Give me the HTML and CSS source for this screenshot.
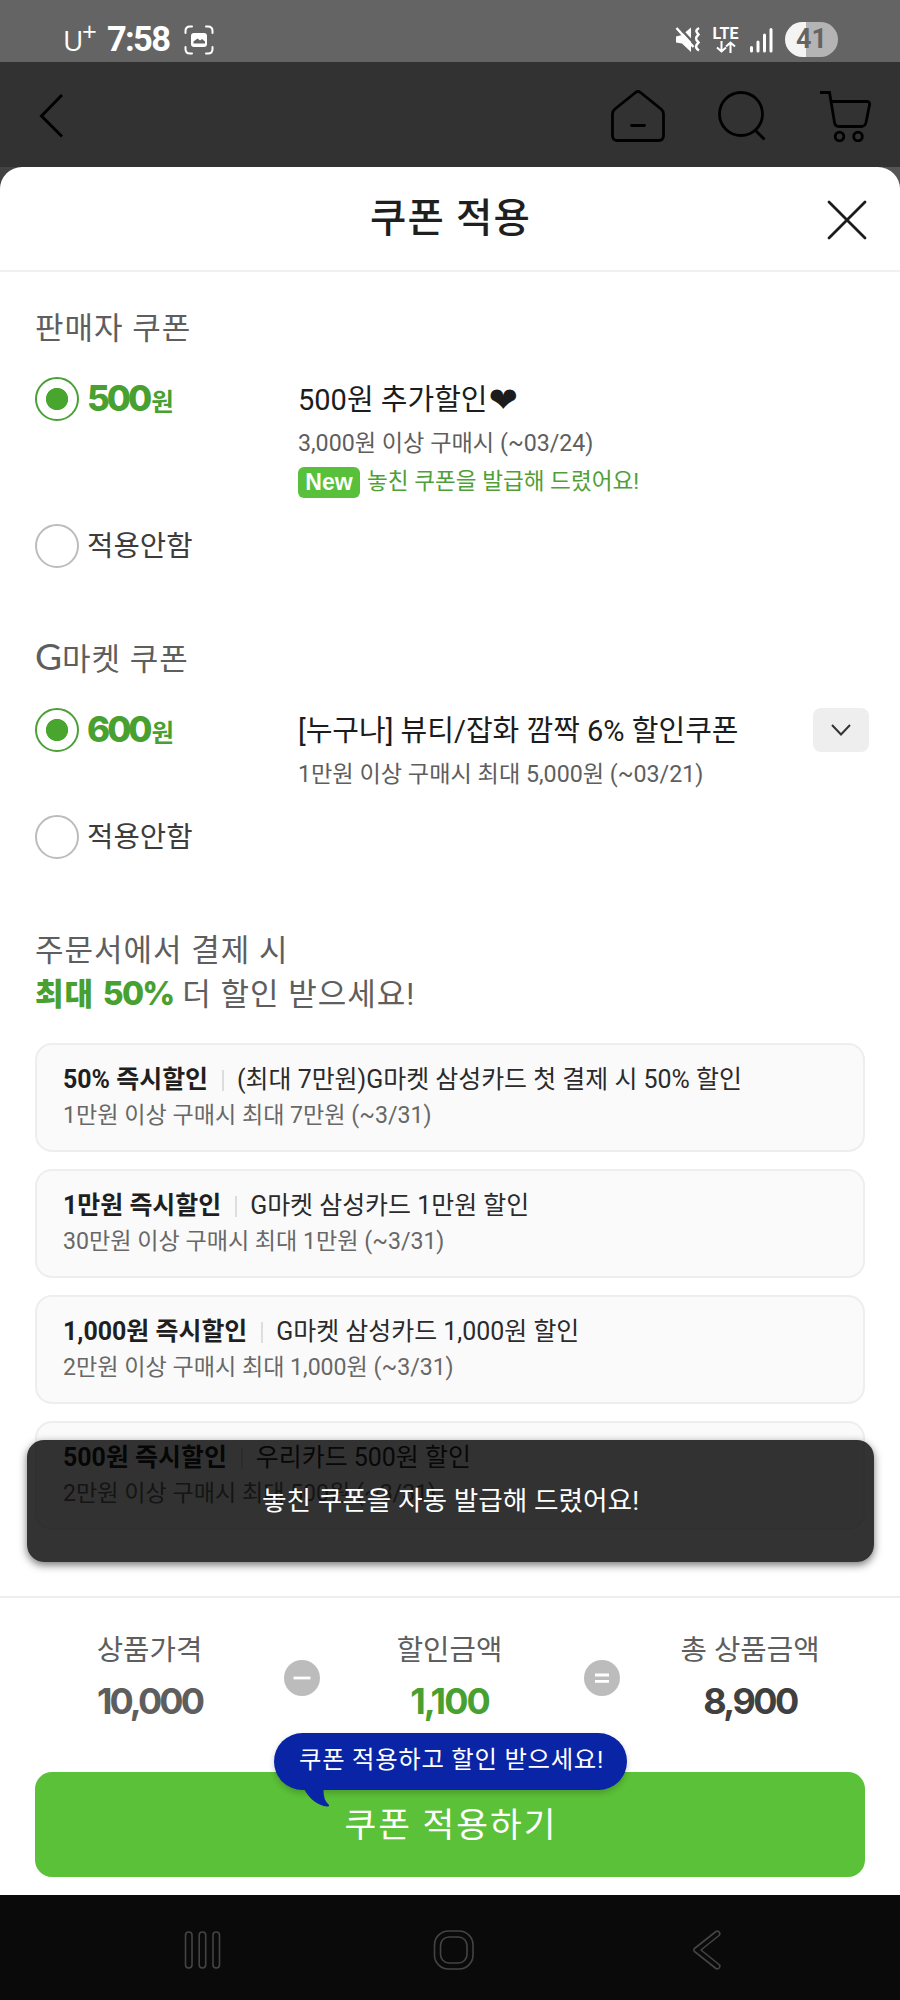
FILE: index.html
```html
<!DOCTYPE html>
<html lang="ko">
<head>
<meta charset="utf-8">
<title>쿠폰 적용</title>
<link rel="stylesheet" href="styles.css">
</head>
<body>
<div class="screen">
  <div class="statusbar">
    <div class="status-left">
      <span class="carrier">U<span class="plus">+</span></span>
      <span class="clock">7:58</span>
      <svg class="shot" width="30" height="30" viewBox="0 0 30 30" fill="none" stroke="#fff" stroke-width="2" stroke-linecap="round">
        <path d="M1.5 8V6q0-4.500 4.500-4.500H8M22 1.500h2q4.500 0 4.500 4.500v2M28.500 22v2q0 4.500-4.500 4.500h-2M8 28.500H6Q1.500 28.500 1.500 24v-2"/>
        <rect x="7" y="8" width="16" height="14" rx="3" fill="#fff" stroke="none"/>
        <path d="M9.500 18.500v-2l4-3 2.500 2 2-1.500 3 2.500v2z" fill="#646464" stroke="none"/>
      </svg>
    </div>
    <div class="status-right">
      <svg width="26" height="27" viewBox="0 0 26 27">
        <path d="M1 10.500 7 9 16 1.500v24.500l-9-8.500-6-1z" fill="#fff"/>
        <path d="M3 0 20 18.500" stroke="#646464" stroke-width="2.500"/>
        <path d="M1.500 2 18.500 21" stroke="#fff" stroke-width="2.500"/>
        <path d="M24 2q-4 2.500-2 4.500l1.500 2-2 2.500q-1 1.500 0 3l2 2.500-2 2.500q-1.500 3 2.500 5.500" fill="none" stroke="#fff" stroke-width="2.500"/>
      </svg>
      <div class="lte">
        <span>LTE</span>
        <svg width="20" height="12" viewBox="0 0 20 12" fill="none" stroke="#fff" stroke-width="2"><path d="M5.500 0v10.500M1 6.500l4.500 4 4.500-4M14.500 12V1.500M10 5.500l4.500-4 4.500 4"/></svg>
      </div>
      <svg width="25" height="26" viewBox="0 0 25 26" stroke="#fff" stroke-width="3" stroke-linecap="round"><path d="M2.500 20.500v3.500M9 15v9M15.500 8v16M22 2.500V24"/></svg>
      <div class="battery">41</div>
    </div>
  </div>

  <div class="appbar">
    <svg width="24" height="44" viewBox="0 0 24 44" fill="none" stroke="#000" stroke-width="3"><path d="M23 1 2.500 22 23 42.500"/></svg>
    <div class="appbar-icons">
      <svg width="54" height="52" viewBox="0 0 54 52" fill="none" stroke="#000" stroke-width="2.800" stroke-linecap="round" stroke-linejoin="round"><path d="M24.500 2.500q2.500-2 5 0L50 19q2.500 2 2.500 5v21.500q0 5-5 5h-41q-5 0-5-5V24q0-3 2.500-5zM20.500 35.500h13"/></svg>
      <svg width="48" height="50" viewBox="0 0 48 50" fill="none" stroke="#000" stroke-width="2.800"><circle cx="23" cy="23" r="21.500"/><path d="M37 39l9.500 9.500"/></svg>
      <svg width="52" height="52" viewBox="0 0 52 52" fill="none" stroke="#000" stroke-width="2.800"><path d="M1 2.500h9.500l5 30q.6 4 4.500 4h22q4 0 5-4l3.500-17.500q.7-3.500-3-3.500H12.500"/><circle cx="20.500" cy="46.500" r="4.300"/><circle cx="39" cy="46.500" r="4.300"/></svg>
    </div>
  </div>

  <div class="backdrop">
    <div class="sheet">
      <div class="sheet-head">
        <h1>쿠폰 적용</h1>
        <svg class="close" width="40" height="40" viewBox="0 0 40 40" stroke="#1c1c1c" stroke-width="2.800" stroke-linecap="round"><path d="M2 2l36 36M38 2 2 38"/></svg>
      </div>

      <div class="content">
        <h2>판매자 쿠폰</h2>
        <div class="option">
          <span class="radio on"></span>
          <div class="amount">500<small>원</small></div>
          <div class="info">
            <div class="name">500원 추가할인<span class="heart">❤</span></div>
            <div class="cond">3,000원 이상 구매시 (~03/24)</div>
            <div class="issued"><span class="badge">New</span><span class="issued-text">놓친 쿠폰을 발급해 드렸어요!</span></div>
          </div>
        </div>
        <div class="option none">
          <span class="radio"></span>
          <div class="none-text">적용안함</div>
        </div>

        <h2 class="second"><span class="latin">G</span>마켓 쿠폰</h2>
        <div class="option">
          <span class="radio on"></span>
          <div class="amount">600<small>원</small></div>
          <div class="info">
            <div class="name">[누구나] 뷰티/잡화 깜짝 6% 할인쿠폰</div>
            <div class="cond">1만원 이상 구매시 최대 5,000원 (~03/21)</div>
          </div>
          <div class="more"><svg width="20" height="12" viewBox="0 0 20 12" fill="none" stroke="#333" stroke-width="2"><path d="M1 1l9 9.500L19 1"/></svg></div>
        </div>
        <div class="option none">
          <span class="radio"></span>
          <div class="none-text">적용안함</div>
        </div>

        <h2 class="benefit">주문서에서 결제 시<br><b>최대 <span class="pct">50%</span></b> 더 할인 받으세요!</h2>
        <div class="cards">
          <div class="card"><div class="card-title"><b>50% 즉시할인</b><i></i><span>(최대 7만원)G마켓 삼성카드 첫 결제 시 50% 할인</span></div><div class="card-sub">1만원 이상 구매시 최대 7만원 (~3/31)</div></div>
          <div class="card"><div class="card-title"><b>1만원 즉시할인</b><i></i><span>G마켓 삼성카드 1만원 할인</span></div><div class="card-sub">30만원 이상 구매시 최대 1만원 (~3/31)</div></div>
          <div class="card"><div class="card-title"><b>1,000원 즉시할인</b><i></i><span>G마켓 삼성카드 1,000원 할인</span></div><div class="card-sub">2만원 이상 구매시 최대 1,000원 (~3/31)</div></div>
          <div class="card"><div class="card-title"><b>500원 즉시할인</b><i></i><span>우리카드 500원 할인</span></div><div class="card-sub">2만원 이상 구매시 최대 500원 (~3/31)</div></div>
        </div>
        <div class="toast">놓친 쿠폰을 자동 발급해 드렸어요!</div>
      </div>

      <div class="footer">
        <div class="summary">
          <div class="sum price"><span>상품가격</span><strong>10,000</strong></div>
          <div class="op"><svg width="36" height="36" viewBox="0 0 36 36"><circle cx="18" cy="18" r="18" fill="#bcbcbc"/><path d="M9.500 18h17" stroke="#fff" stroke-width="2.800"/></svg></div>
          <div class="sum green"><span>할인금액</span><strong>1,100</strong></div>
          <div class="op"><svg width="36" height="36" viewBox="0 0 36 36"><circle cx="18" cy="18" r="18" fill="#bcbcbc"/><path d="M11 15h14M11 21.300h14" stroke="#fff" stroke-width="2.800"/></svg></div>
          <div class="sum total"><span>총 상품금액</span><strong>8,900</strong></div>
        </div>
        <div class="apply">쿠폰 적용하기
          <div class="bubble">쿠폰 적용하고 할인 받으세요!
            <svg width="27" height="19" viewBox="0 0 27 19"><path d="M1 0h19.500Q20 11 26 16q.5 2-2 1.500Q10 16 1 0z" fill="#0a24a6"/></svg>
          </div>
        </div>
      </div>
    </div>
  </div>

  <div class="navbar">
    <svg width="37" height="40" viewBox="0 0 37 40" fill="none" stroke="#444" stroke-width="1.600"><rect x="1.500" y="2" width="6.500" height="36" rx="3.200"/><rect x="15.200" y="2" width="6.500" height="36" rx="3.200"/><rect x="29" y="2" width="6.500" height="36" rx="3.200"/></svg>
    <svg class="home" width="42" height="42" viewBox="0 0 42 42" fill="none" stroke="#444" stroke-width="1.600"><rect x="1.500" y="2" width="38.500" height="38" rx="14"/><rect x="7.500" y="8" width="26.500" height="26" rx="8.500"/></svg>
    <svg width="30" height="42" viewBox="0 0 30 42" fill="none" stroke="#444" stroke-width="1.600" stroke-linejoin="round"><path d="M24 2.500 2.500 19.500q-1.500 1.500 0 3L24 39.500q2.500 1 3.500-1t-.5-3L9 21 27 6.500q1.500-1.500.300-3.300T24 2.500z"/></svg>
  </div>
</div>
</body>
</html>
```
FILE: styles.css
```css
* { box-sizing: border-box; }
body { margin: 0; font-family: Roboto, "Noto Sans CJK KR", sans-serif; background: #fff; white-space: nowrap; }
h1, h2 { margin: 0; font-weight: 400; }
svg { display: block; flex: none; }
.screen { width: 900px; height: 2000px; display: flex; flex-direction: column; overflow: hidden; }

.statusbar { height: 62px; background: #646464; display: flex; justify-content: space-between; padding: 0 62px 0 63px; color: #fff; }
.status-left, .status-right { display: flex; align-items: center; padding-top: 17px; }
.carrier { font: 400 28px/30px "Open Sans", sans-serif; position: relative; width: 44px; }
.plus { position: absolute; left: 19px; top: -9px; font-size: 26px; font-weight: 400; }
.clock { font: 700 34.500px/38px Roboto, sans-serif; height: 40px; width: 77px; letter-spacing: -1.700px; }
.status-right { gap: 10px; }
.lte { width: 27px; font: 700 16px/14px Roboto, sans-serif; display: flex; flex-direction: column; align-items: center; margin-left: 1px; }
.battery { width: 53px; height: 35px; margin-left: 1px; border-radius: 18px; background: linear-gradient(90deg, #f4f4f4 40%, #b4b4b4 40%); color: #646464; font: 700 27px/35px Roboto, sans-serif; text-align: center; }

.appbar { height: 105px; background: #323232; display: flex; justify-content: space-between; align-items: center; padding: 2px 29px 0 39px; }
.appbar-icons { display: flex; gap: 53px; align-items: center; }

.backdrop { height: 1728px; background: linear-gradient(90deg, #424242 50%, #555 50%); }
.sheet { height: 1728px; background: #fff; border-radius: 22px 22px 0 0; display: flex; flex-direction: column; }
.sheet-head { height: 105px; flex: none; border-bottom: 2px solid #f0f0f0; display: flex; align-items: center; justify-content: center; position: relative; }
h1 { font-size: 39.500px; line-height: 50px; font-weight: 500; color: #1f1f1f; letter-spacing: 1.200px; padding-left: 1px; }
.close { position: absolute; right: 33px; top: 33px; }

.content { height: 1324px; flex: none; overflow: hidden; padding: 37px 35px 0; position: relative; }
h2 { font-size: 31px; line-height: 40px; letter-spacing: 1px; color: #5e5e5e; }
h2.second { margin-top: 72px; }
.latin { font-family: Lato, sans-serif; font-size: 37px; letter-spacing: 0; line-height: 1px; }
.option { display: flex; margin-top: 28px; }
.option.none { margin-top: 26px; }
.radio { width: 44px; height: 44px; flex: none; border: 2px solid #bcbcbc; border-radius: 50%; background: #fff; }
.radio.on { border-color: #4b9f37; background: radial-gradient(circle, #48a52e 10.700px, #fff 11.500px); }
.amount { width: 211px; margin-left: 8px; font: 800 35px/42px Inter, "Noto Sans CJK KR", sans-serif; letter-spacing: -3px; color: #47a02f; }
.amount small { font: 700 24.500px/30px Roboto, "Noto Sans CJK KR", sans-serif; margin-left: 2px; }
.info { flex: 1; padding-top: 6px; }
.name { font-size: 29px; line-height: 34px; color: #1c1c1c; }
.heart { font-family: "DejaVu Sans", sans-serif; font-size: 35px; line-height: 1px; position: relative; top: 2px; left: 1px; }
.cond { font-size: 23.200px; line-height: 30px; margin-top: 11px; color: #5e5e5e; }
.issued { display: flex; align-items: center; height: 32px; margin-top: 8px; }
.badge { width: 62px; height: 31px; border-radius: 6px; background: #58c03a; color: #fff; font: 700 23px/31px "Liberation Sans", sans-serif; text-align: center; margin-right: 7px; }
.issued-text { font-size: 22.600px; line-height: 30px; color: #4f9f38; }
.none-text { margin-left: 8px; font-size: 28.700px; line-height: 44px; height: 44px; color: #3c3c3c; }
.more { width: 56px; height: 44px; margin-right: -4px; flex: none; border-radius: 8px; background: #eee; display: flex; align-items: center; justify-content: center; }
h2.benefit { margin-top: 70px; line-height: 44px; }
h2 b { color: #47a02f; font-weight: 900; }
.pct { font: 800 32px/30px Inter, sans-serif; letter-spacing: -1.700px; }

.cards { margin-top: 26px; display: grid; gap: 17px; }
.card { height: 109px; border: 2px solid #eee; border-radius: 17px; background: #fafafa; padding: 19px 26px 0; color: #2b2b2b; }
.card-title { display: flex; align-items: center; font-size: 24.950px; line-height: 32px; }
.card-title b { color: #1f1f1f; }
.card-title i { width: 2px; height: 21px; background: #ddd; margin: 0 13px 0 14px; }
.card-sub { font-size: 23.100px; line-height: 30px; margin-top: 5px; color: #686868; }
.toast { position: absolute; left: 27px; top: 1168px; width: 847px; height: 122px; border-radius: 17px; background: rgba(0,0,0,.8); color: #fff; font-size: 26.700px; line-height: 122px; text-align: center; box-shadow: 0 3px 9px rgba(0,0,0,.55); }

.footer { flex: 1; border-top: 2px solid #eee; padding: 35px 0 0; }
.summary { display: grid; grid-template-columns: 267px 38px 257px 48px 248px; padding-left: 16px; height: 139px; }
.sum { display: flex; flex-direction: column; align-items: center; color: #5e5e5e; }
.sum span { font-size: 28.700px; line-height: 34px; }
.sum strong { font: 700 36px/40px Inter, sans-serif; letter-spacing: -2px; margin-top: 14px; }
.sum.price strong { letter-spacing: -2.900px; }
.sum.green strong { color: #47a02f; }
.sum.total strong { color: #404040; letter-spacing: -2.500px; }
.op { display: flex; justify-content: center; padding-top: 27px; }
.apply { position: relative; margin: 0 35px; height: 105px; border-radius: 17px; background: #5bc138; color: #fff; font-size: 34.500px; line-height: 107px; letter-spacing: 2px; padding-left: 2px; text-align: center; }
.bubble { position: absolute; left: 239px; top: -39px; width: 353px; height: 57px; border-radius: 29px; background: #0a24a6; font-size: 24.400px; line-height: 53px; letter-spacing: .7px; padding-left: 2px; box-shadow: 0 3px 6px rgba(0,0,0,.2); }
.bubble svg { position: absolute; left: 29px; top: 56px; }

.navbar { height: 105px; background: #0a0a0a; display: flex; align-items: center; padding: 5px 178px 0 184px; justify-content: space-between; }
.home { margin-right: 5px; }
```
